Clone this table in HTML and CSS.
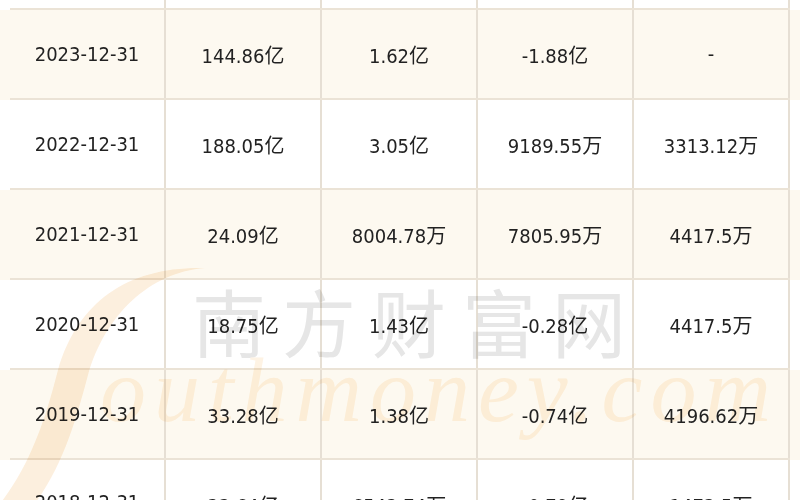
FILE: index.html
```html
<!DOCTYPE html>
<html lang="zh-CN">
<head>
<meta charset="utf-8">
<title>财务数据</title>
<link rel="stylesheet" href="styles.css">
</head>
<body>
<div class="page">
  <div class="table">
    <div class="band white"><div class="row"><div class="cell"></div><div class="cell"></div><div class="cell"></div><div class="cell"></div><div class="cell"></div></div></div>
    <div class="band cream"><div class="row"><div class="cell">2023-12-31</div><div class="cell">144.86亿</div><div class="cell">1.62亿</div><div class="cell">-1.88亿</div><div class="cell">-</div></div></div>
    <div class="band white"><div class="row"><div class="cell">2022-12-31</div><div class="cell">188.05亿</div><div class="cell">3.05亿</div><div class="cell">9189.55万</div><div class="cell">3313.12万</div></div></div>
    <div class="band cream"><div class="row"><div class="cell">2021-12-31</div><div class="cell">24.09亿</div><div class="cell">8004.78万</div><div class="cell">7805.95万</div><div class="cell">4417.5万</div></div></div>
    <div class="band white"><div class="row"><div class="cell">2020-12-31</div><div class="cell">18.75亿</div><div class="cell">1.43亿</div><div class="cell">-0.28亿</div><div class="cell">4417.5万</div></div></div>
    <div class="band cream"><div class="row"><div class="cell">2019-12-31</div><div class="cell">33.28亿</div><div class="cell">1.38亿</div><div class="cell">-0.74亿</div><div class="cell">4196.62万</div></div></div>
    <div class="band white"><div class="row last"><div class="cell">2018-12-31</div><div class="cell">33.64亿</div><div class="cell">6542.74万</div><div class="cell">-0.79亿</div><div class="cell">1472.5万</div></div></div>
  </div>
  <div class="watermark">
    <svg class="swoosh" width="800" height="500" viewBox="0 0 800 500">
      <path d="M205 268 C150 272 105 315 88 375 C76 420 62 470 30 510 L-5 510 C28 470 44 425 58 370 C78 300 130 266 205 268 Z" fill="#fcebd6"/>
    </svg>
    <div class="wm-cn">南方财富网</div>
    <div class="wm-en">outhmoney.com</div>
  </div>
</div>
</body>
</html>
```
FILE: styles.css
```css
html, body {
  margin: 0;
  padding: 0;
  background: #ffffff;
}
.page {
  position: relative;
  width: 800px;
  height: 500px;
  overflow: hidden;
  font-family: "DejaVu Sans Condensed", "DejaVu Sans", "Noto Sans CJK SC", sans-serif;
  font-size: 20px;
  color: #222222;
}
.table {
  margin-top: -80px;
}
.band {
  padding: 0 10px;
}
.band.white {
  background: #ffffff;
}
.band.cream {
  background: #fdf9f0;
}
.row {
  display: grid;
  grid-template-columns: repeat(5, 156px);
  height: 90px;
  box-sizing: border-box;
  border-bottom: 2px solid #ebe3d6;
}
.row.last {
  align-items: start;
}
.row.last .cell {
  padding-top: 30px;
  height: 88px;
  box-sizing: border-box;
  align-items: flex-start;
}
.cell {
  display: flex;
  align-items: center;
  justify-content: center;
  border-right: 2px solid #e6dfd4;
}
.watermark {
  position: absolute;
  left: 0;
  top: 0;
  width: 800px;
  height: 500px;
  mix-blend-mode: multiply;
  pointer-events: none;
}
.swoosh {
  position: absolute;
  left: 0;
  top: 0;
  opacity: 0.8;
}
.wm-cn {
  position: absolute;
  left: 192px;
  top: 270px;
  font-family: "Noto Sans CJK SC", sans-serif;
  font-size: 74px;
  font-weight: 400;
  letter-spacing: 16px;
  color: #e6e6e6;
  line-height: 100px;
}
.wm-en {
  position: absolute;
  left: 100px;
  top: 340px;
  font-family: "Liberation Serif", serif;
  font-style: italic;
  font-size: 92px;
  letter-spacing: 8px;
  color: #fef3e4;
  line-height: 100px;
}
```
